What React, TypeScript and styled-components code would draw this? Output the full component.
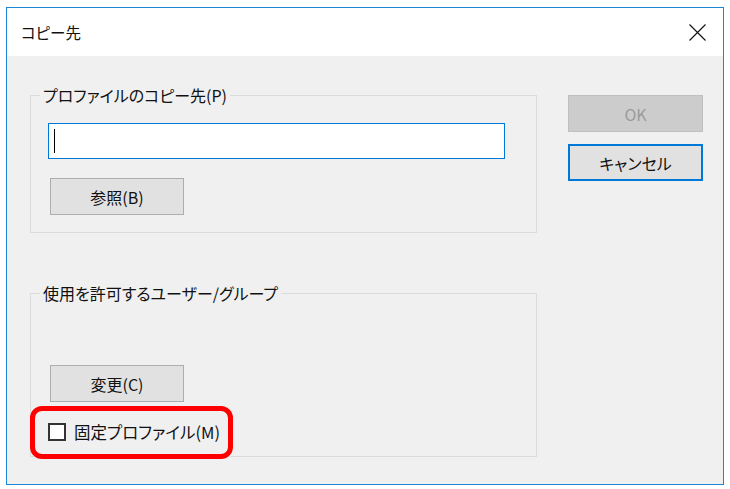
import styled, { createGlobalStyle } from "styled-components";

const GlobalStyle = createGlobalStyle`
    html, body {
        margin: 0;
        padding: 0;
        background: #ffffff;
    }
    body {
        font-family: "Noto Sans CJK JP", "Noto Sans", sans-serif;
        font-feature-settings: "palt";
        color: #000;
    }
`;

const Page = styled.div`
    padding: 7px 0 0 6px;
`;

const Window = styled.div`
    width: 718px;
    height: 478px;
    box-sizing: border-box;
    border: 1px solid #1c86d9;
    display: flex;
    flex-direction: column;
`;

const TitleBar = styled.div`
    height: 48px;
    background: #ffffff;
    display: flex;
    align-items: center;
    justify-content: space-between;
    padding-left: 14px;
`;

const Title = styled.span`
    font-size: 15.5px;
    line-height: 20px;
    color: #111;
`;

const CloseButton = styled.div`
    width: 46px;
    height: 48px;
    margin-right: 3px;
    display: flex;
    align-items: center;
    justify-content: center;
`;

const Client = styled.div`
    flex: 1;
    background: #f0f0f0;
    display: flex;
    padding: 29px 20px 0 23px;
`;

const LeftColumn = styled.div`
    width: 507px;
    display: flex;
    flex-direction: column;
`;

const Group = styled.fieldset<{ $top?: number; $padTop: number; $padBottom: number }>`
    margin: ${(p) => p.$top ?? 0}px 0 0 0;
    padding: ${(p) => p.$padTop}px 17px ${(p) => p.$padBottom}px 17px;
    border: 1px solid #dcdcdc;
    min-width: 0;
    display: flex;
    flex-direction: column;
    align-items: flex-start;
`;

const Legend = styled.legend`
    font-size: 16px;
    line-height: 20px;
    padding: 0 3px;
    margin-left: -8px;
    color: #111;
`;

const TextBox = styled.div`
    width: 457px;
    height: 36px;
    box-sizing: border-box;
    border: 1px solid #0078d7;
    background: #ffffff;
    display: flex;
    align-items: center;
    padding-left: 5px;
`;

const Caret = styled.span`
    width: 1px;
    height: 24px;
    background: #000;
`;

const Button = styled.div<{ $gap: number; $variant?: "default" | "focused" | "disabled" }>`
    margin-top: ${(p) => p.$gap}px;
    width: ${(p) => (p.$variant ? 135 : 134)}px;
    height: 37px;
    box-sizing: border-box;
    margin-left: ${(p) => (p.$variant ? 0 : 2)}px;
    display: flex;
    align-items: center;
    justify-content: center;
    font-size: 16px;
    background: ${(p) => (p.$variant === "disabled" ? "#cccccc" : "#e1e1e1")};
    border: ${(p) =>
        p.$variant === "focused"
            ? "2px solid #0078d7"
            : p.$variant === "disabled"
            ? "1px solid #bfbfbf"
            : "1px solid #adadad"};
    color: ${(p) => (p.$variant === "disabled" ? "#9a9a9a" : "#111")};
`;

const CheckRow = styled.div`
    position: relative;
    margin-top: 20px;
    height: 20px;
    display: flex;
    align-items: center;
    gap: 8px;
    font-size: 16.5px;
    color: #111;
`;

const CheckBox = styled.span`
    width: 18px;
    height: 18px;
    box-sizing: border-box;
    border: 2px solid #333333;
    background: #ffffff;
`;

const Highlight = styled.span`
    position: absolute;
    left: -18px;
    top: -16px;
    width: 203px;
    height: 53px;
    box-sizing: border-box;
    border: 5px solid #ff0000;
    border-radius: 12px;
    pointer-events: none;
`;

const RightColumn = styled.div`
    margin-left: 31px;
    padding-top: 10px;
    display: flex;
    flex-direction: column;
`;

export default function App() {
    return (
        <>
            <GlobalStyle />
            <Page>
                <Window>
                    <TitleBar>
                        <Title>コピー先</Title>
                        <CloseButton>
                            <svg width="17" height="17" viewBox="0 0 17 17">
                                <path d="M0.5 0.5 L16.5 16.5 M16.5 0.5 L0.5 16.5" stroke="#111" strokeWidth="1.1" fill="none" />
                            </svg>
                        </CloseButton>
                    </TitleBar>
                    <Client>
                        <LeftColumn>
                            <Group $padTop={18} $padBottom={17}>
                                <Legend>プロファイルのコピー先(P)</Legend>
                                <TextBox>
                                    <Caret />
                                </TextBox>
                                <Button $gap={19}>参照(B)</Button>
                            </Group>
                            <Group $top={50} $padTop={62} $padBottom={14}>
                                <Legend>使用を許可するユーザー/グループ</Legend>
                                <Button $gap={0}>変更(C)</Button>
                                <CheckRow>
                                    <CheckBox />
                                    <span>固定プロファイル(M)</span>
                                    <Highlight />
                                </CheckRow>
                            </Group>
                        </LeftColumn>
                        <RightColumn>
                            <Button $gap={0} $variant="disabled">OK</Button>
                            <Button $gap={12} $variant="focused">キャンセル</Button>
                        </RightColumn>
                    </Client>
                </Window>
            </Page>
        </>
    );
}
